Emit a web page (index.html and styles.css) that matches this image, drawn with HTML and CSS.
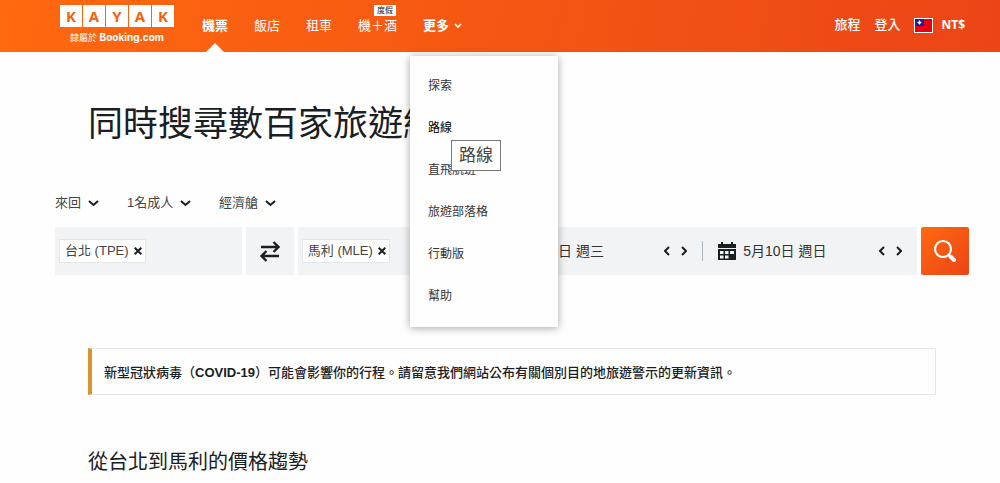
FILE: index.html
```html
<!DOCTYPE html>
<html lang="zh-Hant">
<head>
<meta charset="utf-8">
<meta name="viewport" content="width=device-width, initial-scale=1">
<title>KAYAK</title>
<link rel="stylesheet" href="styles.css">
</head>
<body>
<header class="header">
  <a class="brand" href="#">
    <span class="tiles"><span>K</span><span>A</span><span>Y</span><span>A</span><span>K</span></span>
    <span class="owner">隸屬於 <b>Booking.com</b></span>
  </a>
  <nav class="nav">
    <a class="nav-link current" href="#">機票</a>
    <a class="nav-link" href="#">飯店</a>
    <a class="nav-link" href="#">租車</a>
    <a class="nav-link" href="#">機＋酒<span class="badge">度假</span></a>
    <div class="more">
      <button class="more-button" type="button" aria-expanded="true">更多
        <svg width="8" height="6" viewBox="0 0 8 6" fill="none" stroke="currentColor" stroke-width="1.6"><path d="M1 1l3 3 3-3"/></svg>
      </button>
      <div class="menu">
        <a href="#">探索</a>
        <a class="hovered" href="#">路線</a>
        <a href="#">直飛航班</a>
        <a href="#">旅遊部落格</a>
        <a href="#">行動版</a>
        <a href="#">幫助</a>
        <span class="tooltip" role="tooltip">路線</span>
      </div>
    </div>
  </nav>
  <div class="account">
    <a href="#">旅程</a>
    <a href="#">登入</a>
    <button class="currency" type="button">
      <svg width="19" height="15" viewBox="0 0 19 15"><rect width="19" height="15" fill="#fff"/><rect x="1" y="1" width="17" height="13" fill="#e60012"/><rect x="1" y="1" width="9" height="7" fill="#1a1fa0"/><circle cx="5.5" cy="4.5" r="1.5" fill="#fff"/><path d="M5.5 2v5M3 4.500h5" stroke="#fff" stroke-width=".5"/></svg>
      NT$
    </button>
  </div>
</header>

<main class="page">
  <h1 class="title">同時搜尋數百家旅遊網站</h1>

  <form class="search">
    <div class="options">
      <label class="option">
        <select aria-label="行程類型"><option>來回</option></select>
        <svg width="11" height="7" viewBox="0 0 11 7"><path d="M1 1l4.500 4L10 1"/></svg>
      </label>
      <label class="option">
        <select aria-label="旅客"><option>1名成人</option></select>
        <svg width="11" height="7" viewBox="0 0 11 7"><path d="M1 1l4.500 4L10 1"/></svg>
      </label>
      <label class="option">
        <select aria-label="艙等"><option>經濟艙</option></select>
        <svg width="11" height="7" viewBox="0 0 11 7"><path d="M1 1l4.500 4L10 1"/></svg>
      </label>
    </div>
    <div class="fields">
      <div class="field place">
        <span class="tag">台北 (TPE)
          <button type="button" aria-label="移除台北"><svg width="8" height="8" viewBox="0 0 8 8"><path d="M.7.7l6.6 6.6M7.3.7L.7 7.3"/></svg></button>
        </span>
        <input type="text" aria-label="出發地">
      </div>
      <button class="field swap" type="button" aria-label="對調">
        <svg width="20" height="22" viewBox="0 0 20 22"><path d="M1 7h17M13.500 2l5 5-5 5M19 16H2M6.500 11l-5 5 5 5"/></svg>
      </button>
      <div class="field place">
        <span class="tag">馬利 (MLE)
          <button type="button" aria-label="移除馬利"><svg width="8" height="8" viewBox="0 0 8 8"><path d="M.7.7l6.6 6.6M7.3.7L.7 7.3"/></svg></button>
        </span>
        <input type="text" aria-label="目的地">
      </div>
      <div class="field dates">
        <div class="date">
          <button class="day" type="button">
            <svg width="18" height="18" viewBox="0 0 18 18"><path fill-rule="evenodd" d="M3 0h2v2h8V0h2v2h3v4H0V2h3zM0 7h18v11H0zM2 9v3h3.500V9zm5 0v3h3.500V9zm5 0v3H16V9zM2 13.500v3h3.500v-3zm5 0v3h3.500v-3z"/></svg>
            5月6日 週三
          </button>
          <button class="step" type="button" aria-label="前一天"><svg width="6" height="10" viewBox="0 0 6 10"><path d="M5 1L1 5l4 4"/></svg></button>
          <button class="step" type="button" aria-label="後一天"><svg width="6" height="10" viewBox="0 0 6 10"><path d="M1 1l4 4-4 4"/></svg></button>
        </div>
        <div class="date">
          <button class="day" type="button">
            <svg width="18" height="18" viewBox="0 0 18 18"><path fill-rule="evenodd" d="M3 0h2v2h8V0h2v2h3v4H0V2h3zM0 7h18v11H0zM2 9v3h3.500V9zm5 0v3h3.500V9zm5 0v3H16V9zM2 13.500v3h3.500v-3zm5 0v3h3.500v-3z"/></svg>
            5月10日 週日
          </button>
          <button class="step" type="button" aria-label="前一天"><svg width="6" height="10" viewBox="0 0 6 10"><path d="M5 1L1 5l4 4"/></svg></button>
          <button class="step" type="button" aria-label="後一天"><svg width="6" height="10" viewBox="0 0 6 10"><path d="M1 1l4 4-4 4"/></svg></button>
        </div>
      </div>
      <button class="submit" type="submit" aria-label="搜尋">
        <svg width="24" height="24" viewBox="0 0 24 24" fill="none" stroke="#fff"><circle cx="10" cy="10" r="8" stroke-width="2.200"/><path d="M15.500 15.500l1.500 1.500" stroke-width="2.200"/><path d="M17.500 17.500l3.500 3.500" stroke-width="4" stroke-linecap="round"/></svg>
      </button>
    </div>
  </form>

  <p class="notice">新型冠狀病毒（<strong>COVID-19</strong>）可能會影響你的行程。請留意我們網站公布有關個別目的地旅遊警示的更新資訊。</p>

  <h2 class="subtitle">從台北到馬利的價格趨勢</h2>
</main>
</body>
</html>
```
FILE: styles.css
```css
* { box-sizing: border-box; }

body {
  margin: 0;
  background: #fefefe;
  color: #192024;
  font: 13px/20px "Liberation Sans", "Noto Sans CJK TC", sans-serif;
}

a { color: inherit; text-decoration: none; }

button, select, input {
  margin: 0;
  padding: 0;
  border: 0;
  background: none;
  color: inherit;
  font: inherit;
}

svg { display: block; flex: none; }

/* Header */
.header {
  display: flex;
  align-items: center;
  height: 52px;
  padding: 0 35px 0 60px;
  background: linear-gradient(100deg, #ff690f, #ec4417);
  color: #fff;
}

.brand {
  display: flex;
  flex-direction: column;
  align-items: center;
  gap: 4px;
  margin-right: 28px;
  padding-bottom: 3px;
}

.tiles { display: flex; gap: 1px; }

.tiles span {
  width: 22px;
  background: #fff;
  color: #f5620f;
  font: 700 15px/22px "Open Sans", sans-serif;
  text-align: center;
}

.owner { font-size: 9px; line-height: 12px; white-space: nowrap; }
.owner b { font-family: Inter, sans-serif; font-size: 10px; }

.nav { display: flex; gap: 26px; align-self: stretch; }

.nav-link, .more {
  position: relative;
  display: flex;
  align-items: center;
  padding-bottom: 1px;
  white-space: nowrap;
}

.current { font-weight: 700; }

.current::after {
  content: "";
  position: absolute;
  bottom: 0;
  left: 50%;
  margin-left: -9px;
  border: 9px solid transparent;
  border-top: 0;
  border-bottom-color: #fefefe;
}

.badge {
  position: absolute;
  top: 5px;
  right: 1px;
  padding: 0 3px;
  background: #fff;
  color: #192024;
  font-size: 8px;
  line-height: 11px;
}

.more-button { display: flex; align-items: center; gap: 5px; font-weight: 700; }

.menu {
  position: absolute;
  z-index: 1;
  top: 56px;
  left: -13px;
  width: 148px;
  padding: 9px 0 10px;
  background: #fefefe;
  box-shadow: 0 1px 8px rgba(0, 0, 0, .35);
  color: #333;
  font-size: 12px;
  line-height: 42px;
}

.menu a { display: block; padding: 0 18px; }
.menu .hovered { color: #000; }

.tooltip {
  position: absolute;
  top: 84px;
  left: 41px;
  padding: 0 7px;
  border: 1px solid #777;
  background: #fff;
  color: #444;
  font-size: 17px;
  line-height: 29px;
}

.account {
  display: flex;
  align-items: center;
  gap: 14px;
  margin-left: auto;
  padding-bottom: 2px;
  font-weight: 500;
}

.currency {
  display: flex;
  align-items: center;
  gap: 8px;
  font: 700 12px/20px "Open Sans", sans-serif;
}

/* Page */
.page { padding: 47px 31px 8px 55px; }

.title, .subtitle { margin: 0 33px; font-weight: 400; }
.title { font-size: 35px; line-height: 50px; }

.search { margin-top: 44px; }
.options { display: flex; gap: 28px; margin-bottom: 14px; color: #444; }
.option { display: flex; align-items: center; gap: 6px; }
.option select { appearance: none; }

.option path, .tag path, .swap path, .step path {
  fill: none;
  stroke: #192024;
  stroke-width: 2;
}

.fields {
  display: grid;
  grid-template-columns: 187fr 48px 187fr 429fr 48px;
  gap: 4px;
}

.field {
  display: flex;
  align-items: center;
  min-width: 0;
  height: 48px;
  background: #f2f3f5;
}

.place { padding: 0 4px; }
.place input { flex: 1; min-width: 0; }

.tag {
  display: flex;
  align-items: center;
  gap: 5px;
  padding: 1px 3px 1px 5px;
  border: 1px solid #e4e6e8;
  background: #fff;
  color: #444;
  white-space: nowrap;
}

.swap { justify-content: center; }
.swap path { stroke-width: 2.4; }

.date {
  display: flex;
  flex: 1;
  align-items: center;
  gap: 11px;
  padding: 0 15px;
}

.date + .date { border-left: 1px solid #aab4bc; }

.day {
  display: flex;
  flex: 1;
  align-items: center;
  gap: 7px;
  color: #333;
  font-size: 14px;
  white-space: nowrap;
}

.day svg { fill: #192024; }

.submit {
  display: flex;
  align-items: center;
  justify-content: center;
  border-radius: 2px;
  background: linear-gradient(135deg, #ff690f, #ec4417);
}

.notice {
  margin: 73px 33px 0;
  padding: 14px 12px 11px;
  border: 1px solid #e6e7e9;
  border-left: 4px solid #d9932f;
  font-weight: 500;
}

.subtitle { margin-top: 53px; font-size: 20px; line-height: 28px; }

.page { padding-bottom: 7px; }
```
